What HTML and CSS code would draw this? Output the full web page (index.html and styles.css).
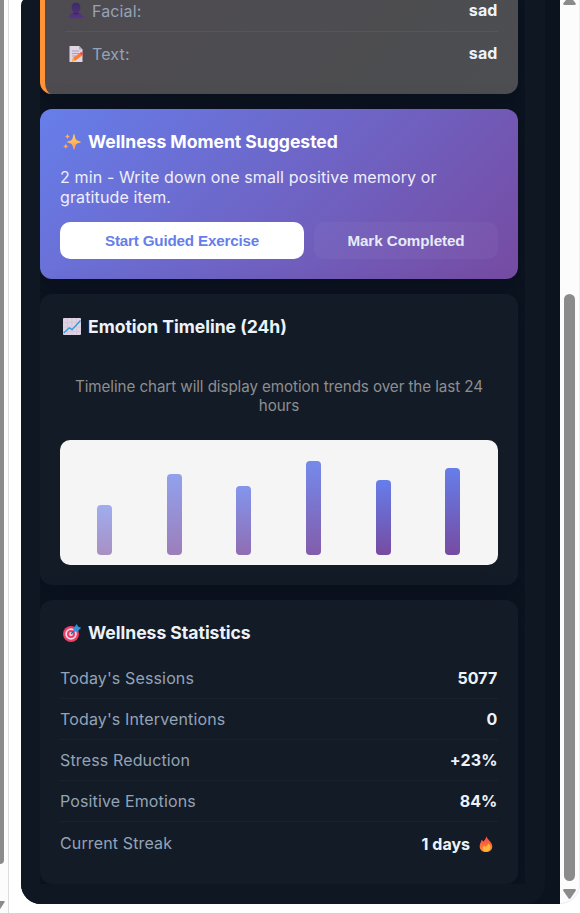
FILE: index.html
```
<!DOCTYPE html>
<html lang="en">
<head>
    <meta charset="UTF-8">
    <meta name="viewport" content="width=device-width, initial-scale=1.0">
    <title>Wellness Dashboard</title>
    <link rel="stylesheet" href="styles.css">
</head>
<body>
    <div class="rail">
        <div class="rail-track">
            <div class="rail-thumb"></div>
            <svg class="rail-arrow" width="5" height="9" viewBox="0 0 5 9"><path d="M0 0h4.2q.8.5.3 1.3L.5 7.500 0 8z" fill="#8b8b8b"/></svg>
        </div>
    </div>
    <div class="panel">
        <div class="content">
            <div class="cards">
                <div class="card emotion">
                    <div class="row">
                        <span class="label"><svg class="icon" viewBox="0 0 18 18"><defs><linearGradient id="bust" x1="0" y1="0" x2="0" y2="1"><stop offset="0" stop-color="#3c2a63"/><stop offset="1" stop-color="#573385"/></linearGradient></defs><path d="M9 .8c3 0 4.500 2 4.400 4.700 0 2-.9 3.600-2 4.400v1.400c2.800.4 5 1.700 5.300 5H1.300c.3-3.300 2.500-4.600 5.300-5V9.900c-1.200-.8-2-2.500-2-4.400C4.600 2.800 6 .8 9 .8z" fill="url(#bust)"/><path d="M6.600 10.500q2.400 1.600 4.800 0v1.200q-2.400 1.300-4.800 0z" fill="#38245e"/></svg>Facial:</span>
                        <span class="value">sad</span>
                    </div>
                    <div class="row">
                        <span class="label"><svg class="icon" viewBox="0 0 18 18"><path d="M2.500 1h9.500l3.500 3.500V17h-13z" fill="#dfd5e4"/><path d="M12 1v3.500h3.500z" fill="#b5a8c0"/><path d="M5 6h7M5 8.500h7M5 11h4" stroke="#a99db7" stroke-width="1"/><path d="M5 16.500l1-3.500 6.800-5 2.400 2.600-6.700 5z" fill="#ff7b32"/><path d="M6 13l2.400 2.500-3.400 1z" fill="#ffb24b"/><path d="M12.500 8.200l1.300-1q1-.5 1.900.5t0 1.800l-1 .9z" fill="#f8484f"/></svg>Text:</span>
                        <span class="value">sad</span>
                    </div>
                </div>

                <div class="card moment">
                    <h3><svg class="icon big" viewBox="0 0 20 20"><defs><linearGradient id="spark" x1="0" y1="0" x2="0" y2="1"><stop offset="0" stop-color="#ffd65a"/><stop offset="1" stop-color="#ff9658"/></linearGradient></defs><path d="M12 2c.7 0 .9 4 2 5.400S19 9.300 19 10s-3.900 1-5 2.500S12.700 18 12 18s-.9-4-2-5.500S5 10.700 5 10s3.900-1.100 5-2.600S11.300 2 12 2z" fill="url(#spark)"/><path d="M5.500 1.800c.4 1.700.8 2.200 2.500 2.700-1.700.5-2.100 1-2.500 2.700C5 5.500 4.600 5 3 4.500c1.600-.5 2-1 2.500-2.700zM3.800 11.500c.4 1.800.9 2.300 2.700 2.800-1.800.5-2.300 1-2.700 2.800-.5-1.800-1-2.300-2.800-2.800 1.800-.5 2.300-1 2.800-2.800z" fill="#ffad58"/></svg>Wellness Moment Suggested</h3>
                    <p class="suggestion">2 min - Write down one small positive memory or gratitude item.</p>
                    <div class="actions">
                        <button class="btn primary">Start Guided Exercise</button>
                        <button class="btn secondary">Mark Completed</button>
                    </div>
                </div>

                <div class="card timeline">
                    <h3><svg class="icon big" viewBox="0 0 20 20"><rect x="1" y="1" width="18" height="17" rx="1" fill="#ddd3e2"/><path d="M5.500 1v17M10 1v17M14.500 1v17M1 5.500h18M1 10h18M1 14.500h18" stroke="#d0c4d8" stroke-width=".7"/><path d="M1.700 16l5.600-5.200 2.800 1.800L18.500 3.500" fill="none" stroke="#2e9ae0" stroke-width="1.400"/></svg>Emotion Timeline (24h)</h3>
                    <p class="hint">Timeline chart will display emotion trends over the last 24 hours</p>
                    <div class="chart">
                        <div class="bar" style="height: 50px; opacity: 0.6"></div>
                        <div class="bar" style="height: 81px; opacity: 0.7"></div>
                        <div class="bar" style="height: 69px; opacity: 0.8"></div>
                        <div class="bar" style="height: 94px; opacity: 0.9"></div>
                        <div class="bar" style="height: 75px"></div>
                        <div class="bar" style="height: 87px"></div>
                    </div>
                </div>

                <div class="card stats">
                    <h3><svg class="icon big" viewBox="0 0 20 20"><circle cx="9" cy="11" r="8" fill="#ef3d65"/><circle cx="9" cy="11" r="5.800" fill="#e6dce9"/><circle cx="9" cy="11" r="4" fill="#ef3d65"/><circle cx="9" cy="11" r="1.900" fill="#e6dce9"/><path d="M9 11l6-6" stroke="#27639c" stroke-width="1.300"/><path d="M11.300 5.500L14.800 1l1.200 2.500 3.200 1.200-4 4-3.400-.5z" fill="#2e95df"/></svg>Wellness Statistics</h3>
                    <div class="row"><span class="label">Today's Sessions</span><span class="value">5077</span></div>
                    <div class="row"><span class="label">Today's Interventions</span><span class="value">0</span></div>
                    <div class="row"><span class="label">Stress Reduction</span><span class="value">+23%</span></div>
                    <div class="row"><span class="label">Positive Emotions</span><span class="value">84%</span></div>
                    <div class="row"><span class="label">Current Streak</span><span class="value streak">1 days <svg class="icon flame" viewBox="0 0 18 18"><defs><linearGradient id="fire" x1="0" y1="0" x2="0" y2="1"><stop offset="0" stop-color="#f34343"/><stop offset="1" stop-color="#ff8a38"/></linearGradient></defs><path d="M9.500 1c.2 3.300 5.800 5.800 5.800 10.400 0 3.500-2.700 5.600-6.300 5.600s-6.300-2.200-6.300-5.600C2.700 8.500 4 7.700 4.600 4.800c.9.600 1.300 1.100 1.500 1.900C7.700 5.300 8.900 3.300 9.500 1z" fill="url(#fire)"/><path d="M11.300 8.500c2 1.800 2.500 3 2.200 4.500-.3 2.100-2 3.500-4.200 3.500-2.200 0-3.600-1.300-3.600-2.900 0-1.300.9-2.100 1.400-3.100.8.400 1 .8 1.200 1.500 1.500-.7 2.600-1.900 3-3.500z" fill="#ffb53a"/></svg></span></div>
                </div>
            </div>
        </div>
    </div>
    <div class="scrollbar">
        <svg class="arrow-up" width="13" height="5" viewBox="0 0 13 5"><path d="M3 0h7l2.800 3.500q.2 1.500-1.300 1.500H1.500Q0 5 .2 3.500z" fill="#8b8b8b"/></svg>
        <div class="thumb"></div>
        <svg class="arrow-down" width="13" height="10" viewBox="0 0 13 10"><path d="M1.200 0h10.600q1.500.3.900 1.700L7.600 9.300q-1.100 1.200-2.200 0L.3 1.700Q-.3.300 1.200 0z" fill="#8b8b8b"/></svg>
    </div>
</body>
</html>
```
FILE: styles.css
```
* { box-sizing: border-box; margin: 0; padding: 0; }
body { font-family: Inter, "Liberation Sans", sans-serif; font-size: 16px; line-height: 20px; display: flex; height: 913px; overflow: hidden; background: #fff; color: #edf2f9; }

.rail { width: 21px; height: 913px; flex: none; }
.rail-track { width: 9px; height: 913px; background: #fcfcfc; border-right: 1px solid #dcdcdc; }
.rail-thumb { width: 4px; height: 864px; background: #8b8b8b; border-bottom-right-radius: 4px; }
.rail-arrow { display: block; margin-top: 37px; }

.panel { width: 539px; height: 904px; flex: none; padding-right: 15px; background: #0b131e; border-radius: 3px 0 0 20px / 8px 0 0 20px; overflow: hidden; }
.content { height: 904px; padding: 0 20px 20px 19px; background: #0f1722; border-bottom-right-radius: 20px; }
.cards { height: 884px; padding-right: 7px; display: flex; flex-direction: column; justify-content: flex-end; gap: 15px; overflow: hidden; background: #0d1521; }

.card { flex: none; padding: 20px; border-radius: 12px; background: #131b26; box-shadow: 0 8px 32px rgba(0, 8, 24, 0.3); }
.card h3 { display: flex; align-items: center; font-size: 17.6px; font-weight: 700; letter-spacing: -0.04px; line-height: 22px; }
.icon { width: 18px; height: 18px; margin: 0 7px 0 2px; flex: none; }
.icon.big { width: 20px; height: 20px; margin: 0 6px 0 2px; }
.icon.flame { margin: 0 3px 0 7px; }

.row { display: flex; justify-content: space-between; align-items: center; height: 41px; border-bottom: 1px solid #1a222d; }
.row:last-child { height: 42px; border-bottom: none; }
.label { display: flex; align-items: center; letter-spacing: 0.14px; color: #94a3b8; }
.value { display: flex; align-items: center; font-weight: 700; letter-spacing: 0.12px; padding-right: 0.5px; }
.value.streak { padding: 2px 0 0; letter-spacing: 0; }

.emotion { background: linear-gradient(135deg, #4f4b50, #4c4e51); border-left: 5px solid #ff9436; }
.emotion .row { height: 43px; border-color: #55565a; }
.emotion .row:last-child { height: 42px; }
.emotion .label { padding-top: 2px; }

.moment { height: 170px; background: linear-gradient(135deg, #667eea, #764ba2); color: #fff; }
.moment h3 { margin: 2px 0 14px; }
.suggestion { color: #f0effb; margin-bottom: 15px; letter-spacing: 0.13px; }
.actions { display: flex; gap: 10px; }
.btn { height: 37px; border: none; border-radius: 10px; font-family: "Liberation Sans", Arial, sans-serif; font-size: 15.2px; font-weight: 600; }
.primary { width: 244px; background: #fff; color: #667eea; letter-spacing: -0.18px; }
.secondary { flex: 1; background: rgba(255, 255, 255, 0.04); color: #e6ebf8; letter-spacing: -0.07px; }

.timeline { height: 291px; }
.timeline h3 { margin-top: 2px; }
.hint { margin: 39px 0 25px; font-size: 15.2px; line-height: 19px; letter-spacing: -0.08px; text-align: center; color: #8d8e90; }
.chart { display: flex; align-items: flex-end; justify-content: space-around; height: 125px; padding: 10px 10.4px 10px 10px; border-radius: 10px; background: #f5f5f5; }
.bar { width: 15px; border-radius: 4px; background: linear-gradient(to bottom, #667eea, #764ba2); }

.stats { height: 284px; }
.stats h3 { margin: 2px 0 14px; }

.scrollbar { width: 20px; height: 904px; flex: none; display: flex; flex-direction: column; padding-left: 3px; background: #fcfcfc; border-right: 1px solid #e9eefa; border-bottom: 1px solid #e9eefa; border-bottom-right-radius: 20px; }
.arrow-up { margin-bottom: 289px; }
.thumb { width: 11px; height: 587px; margin-left: 1px; border-radius: 6px; background: #8b8b8b; }
.arrow-down { margin-top: 8px; }
```
